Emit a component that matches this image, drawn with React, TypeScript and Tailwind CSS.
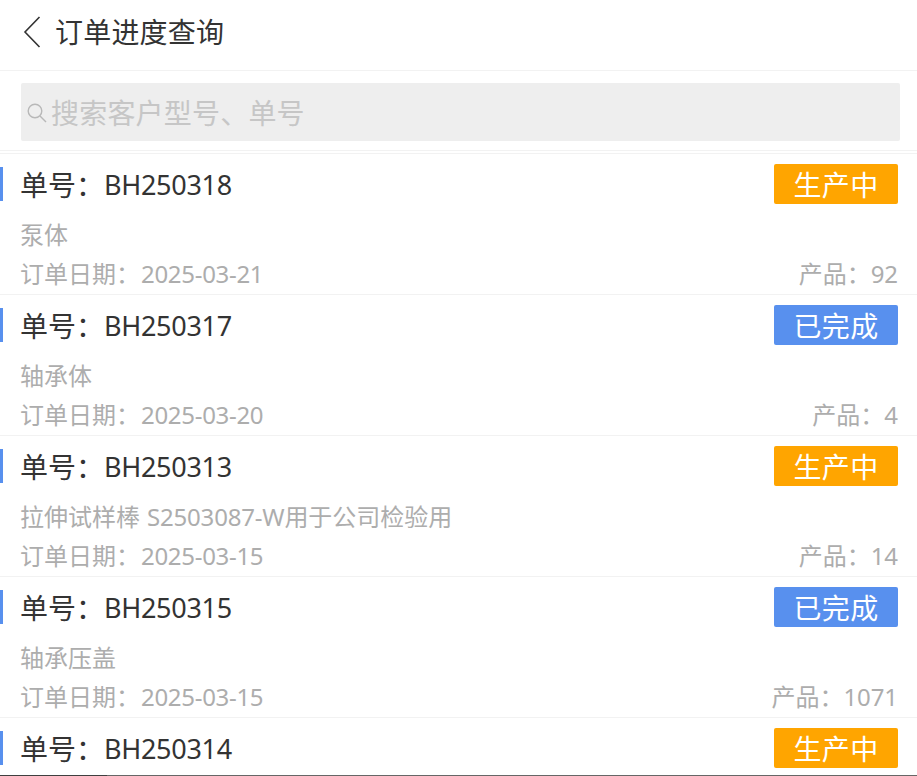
const orders = [
  { no: "BH250318", status: "生产中", name: ["泵体"], date: "2025-03-21", qty: "92" },
  { no: "BH250317", status: "已完成", name: ["轴承体"], date: "2025-03-20", qty: "4" },
  { no: "BH250313", status: "生产中", name: ["拉伸试样棒", " S2503087-W", "用于公司检验用"], date: "2025-03-15", qty: "14" },
  { no: "BH250315", status: "已完成", name: ["轴承压盖"], date: "2025-03-15", qty: "1071" },
];

function Head({ no, status }: { no: string; status: string }) {
  return (
    <div className="flex h-[40px] items-center justify-between">
      <div className="flex h-[34px] items-center border-l-[3px] border-[#5890ee] pl-[17px] pt-[2px] text-[28px] text-[#333333]">
        单号：<span className="text-[27px] tracking-[-0.3px]">{no}</span>
      </div>
      <div
        className={
          status === "生产中"
            ? "mr-[19px] flex h-[40px] w-[124px] items-center justify-center rounded-[2px] bg-[#ffa500] pt-[2px] text-[28px] tracking-[0.3px] text-white"
            : "mr-[19px] flex h-[40px] w-[124px] items-center justify-center rounded-[2px] bg-[#5890ee] pt-[2px] text-[28px] tracking-[0.3px] text-white"
        }
      >
        {status}
      </div>
    </div>
  );
}

export default function App() {
  return (
    <div
      className="flex h-[776px] w-[917px] flex-col overflow-hidden bg-white"
      style={{ fontFamily: '"Noto Sans", "Noto Sans CJK SC", sans-serif' }}
    >
      <div className="h-[775px] overflow-hidden">
        <div className="flex h-[71px] items-center border-b border-[#f2f2f2] pb-[6px] pl-[23px]">
          <svg width="18" height="32" viewBox="0 0 18 32" fill="none" stroke="#333" strokeWidth="1.6">
            <path d="M16.5 1 L2 16 L16.5 31" />
          </svg>
          <span className="ml-[14px] text-[28px] tracking-[0.2px] text-[#333333]">订单进度查询</span>
        </div>
        <div className="h-[80px] border-b border-[#f2f2f2] pt-[12px]">
          <div className="ml-[21px] mr-[17px] flex h-[58px] items-center rounded-[2px] bg-[#eeeeee] pl-[6px]">
            <svg width="20" height="20" viewBox="0 0 20 20" fill="none" stroke="#b8b8b8" strokeWidth="1.4" className="mt-[2px]">
              <circle cx="8" cy="8" r="6.8" />
              <path d="M13 13 L19 19" />
            </svg>
            <span className="ml-[4px] pt-[2px] text-[28px] tracking-[0.2px] text-[#c6c6c6]">搜索客户型号、单号</span>
          </div>
        </div>
        <div className="mt-[2px] h-[1px] bg-[#f2f2f2]" />
        {orders.map((o) => (
          <div key={o.no} className="h-[141px] border-b border-[#f2f2f2] pt-[10px]">
            <Head no={o.no} status={o.status} />
            <div className="mb-[-1px] mt-[11px] pl-[20px] text-[24px] leading-[40px] text-[#adadad]">
              {o.name[0]}
              {o.name[1] && <span className="ml-[1px] tracking-[-0.2px]">{o.name[1]}</span>}
              {o.name[2]}
            </div>
            <div className="flex justify-between pl-[20px] pr-[19px] text-[24px] leading-[40px] text-[#adadad]">
              <span>
                订单日期：<span className="ml-[1px] tracking-[-0.3px]">{o.date}</span>
              </span>
              <span>
                产品：<span className="tracking-[-0.1px]">{o.qty}</span>
              </span>
            </div>
          </div>
        ))}
        <div className="pt-[10px]">
          <Head no="BH250314" status="生产中" />
        </div>
      </div>
      <div className="h-[1px] bg-[linear-gradient(90deg,#3f3f3f_0,#3f3f3f_107px,#666666_107px)]" />
    </div>
  );
}
